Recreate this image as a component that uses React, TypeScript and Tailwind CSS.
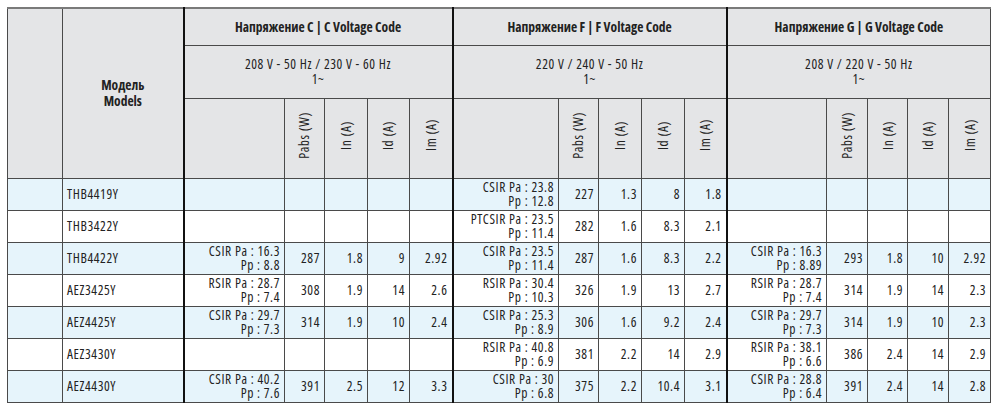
import React from "react";

type Block = [string, string, string, string, string, string] | null;

interface Row {
  model: string;
  c: Block;
  f: Block;
  g: Block;
}

const rows: Row[] = [
  { model: "THB4419Y", c: null, f: ["CSIR Pa : 23.8", "Pp : 12.8", "227", "1.3", "8", "1.8"], g: null },
  { model: "THB3422Y", c: null, f: ["PTCSIR Pa : 23.5", "Pp : 11.4", "282", "1.6", "8.3", "2.1"], g: null },
  {
    model: "THB4422Y",
    c: ["CSIR Pa : 16.3", "Pp : 8.8", "287", "1.8", "9", "2.92"],
    f: ["CSIR Pa : 23.5", "Pp : 11.4", "287", "1.6", "8.3", "2.2"],
    g: ["CSIR Pa : 16.3", "Pp : 8.89", "293", "1.8", "10", "2.92"],
  },
  {
    model: "AEZ3425Y",
    c: ["RSIR Pa : 28.7", "Pp : 7.4", "308", "1.9", "14", "2.6"],
    f: ["RSIR Pa : 30.4", "Pp : 10.3", "326", "1.9", "13", "2.7"],
    g: ["RSIR Pa : 28.7", "Pp : 7.4", "314", "1.9", "14", "2.3"],
  },
  {
    model: "AEZ4425Y",
    c: ["CSIR Pa : 29.7", "Pp : 7.3", "314", "1.9", "10", "2.4"],
    f: ["CSIR Pa : 25.3", "Pp : 8.9", "306", "1.6", "9.2", "2.4"],
    g: ["CSIR Pa : 29.7", "Pp : 7.3", "314", "1.9", "10", "2.3"],
  },
  {
    model: "AEZ3430Y",
    c: null,
    f: ["RSIR Pa : 40.8", "Pp : 6.9", "381", "2.2", "14", "2.9"],
    g: ["RSIR Pa : 38.1", "Pp : 6.6", "386", "2.4", "14", "2.9"],
  },
  {
    model: "AEZ4430Y",
    c: ["CSIR Pa : 40.2", "Pp : 7.6", "391", "2.5", "12", "3.3"],
    f: ["CSIR Pa : 30", "Pp : 6.8", "375", "2.2", "10.4", "3.1"],
    g: ["CSIR Pa : 28.8", "Pp : 6.4", "391", "2.4", "14", "2.8"],
  },
];

const groups = [
  { code: "C", volts: "208 V - 50 Hz / 230 V - 60 Hz" },
  { code: "F", volts: "220 V / 240 V - 50 Hz" },
  { code: "G", volts: "208 V / 220 V - 50 Hz" },
];

const units = ["Pabs (W)", "In (A)", "Id (A)", "Im (A)"];

const cell = "border border-[#4a4a4a] p-0";
const thick = "border-l-2 border-l-[#111]";

function BlockCells({ b }: { b: Block }) {
  return (
    <>
      <td className={`${cell} ${thick} pr-[4px] text-right align-middle leading-[14px]`}>
        {b && (
          <>
            <div>{b[0]}</div>
            <div>{b[1]}</div>
          </>
        )}
      </td>
      {[2, 3, 4, 5].map((i) => (
        <td key={i} className={`${cell} pr-[4px] text-right align-middle`}>
          {b ? b[i] : ""}
        </td>
      ))}
    </>
  );
}

export default function App() {
  return (
    <div className="w-[1000px] h-[411px] bg-white pt-[7px] pl-[7px]">
      <table
        className="table-fixed border-collapse w-[983px] text-[13.5px] tracking-[0.6px] text-[#222] border-t-2 border-t-[#7a7a7a] font-stretch-condensed"
        style={{ fontFamily: '"Open Sans", "DejaVu Sans Condensed", sans-serif' }}
      >
        <colgroup>
          {[55, 121, 101, 40, 43, 42, 43, 106, 40, 43, 43, 42, 100, 41, 40, 41, 42].map((w, i) => (
            <col key={i} style={{ width: w }} />
          ))}
        </colgroup>
        <thead className="bg-[#e4e5e7]">
          <tr className="h-[37px]">
            <td rowSpan={3} className={cell}></td>
            <td rowSpan={3} className={`${cell} text-center align-middle font-bold leading-[16px] tracking-normal`}>
              <div>Модель</div>
              <div>Models</div>
            </td>
            {groups.map((g) => (
              <td
                key={g.code}
                colSpan={5}
                className={`${cell} ${thick} text-center align-middle font-bold tracking-normal`}
              >
                Напряжение {g.code} | {g.code} Voltage Code
              </td>
            ))}
          </tr>
          <tr className="h-[53px]">
            {groups.map((g) => (
              <td key={g.code} colSpan={5} className={`${cell} ${thick} text-center align-middle leading-[15px]`}>
                <div>{g.volts}</div>
                <div>1~</div>
              </td>
            ))}
          </tr>
          <tr className="h-[80px]">
            {groups.map((g) => (
              <React.Fragment key={g.code}>
                <td className={`${cell} ${thick}`}></td>
                {units.map((u) => (
                  <td key={u} className={`${cell} text-center align-middle`}>
                    <span className="inline-block [writing-mode:vertical-rl] rotate-180 whitespace-nowrap">{u}</span>
                  </td>
                ))}
              </React.Fragment>
            ))}
          </tr>
        </thead>
        <tbody>
          {rows.map((r, i) => (
            <tr key={r.model} className={`h-[32px] ${i % 2 === 0 ? "bg-[#e6f4fb]" : "bg-white"}`}>
              <td className={cell}></td>
              <td className={`${cell} pl-[4px] align-middle`}>{r.model}</td>
              <BlockCells b={r.c} />
              <BlockCells b={r.f} />
              <BlockCells b={r.g} />
            </tr>
          ))}
        </tbody>
      </table>
    </div>
  );
}
